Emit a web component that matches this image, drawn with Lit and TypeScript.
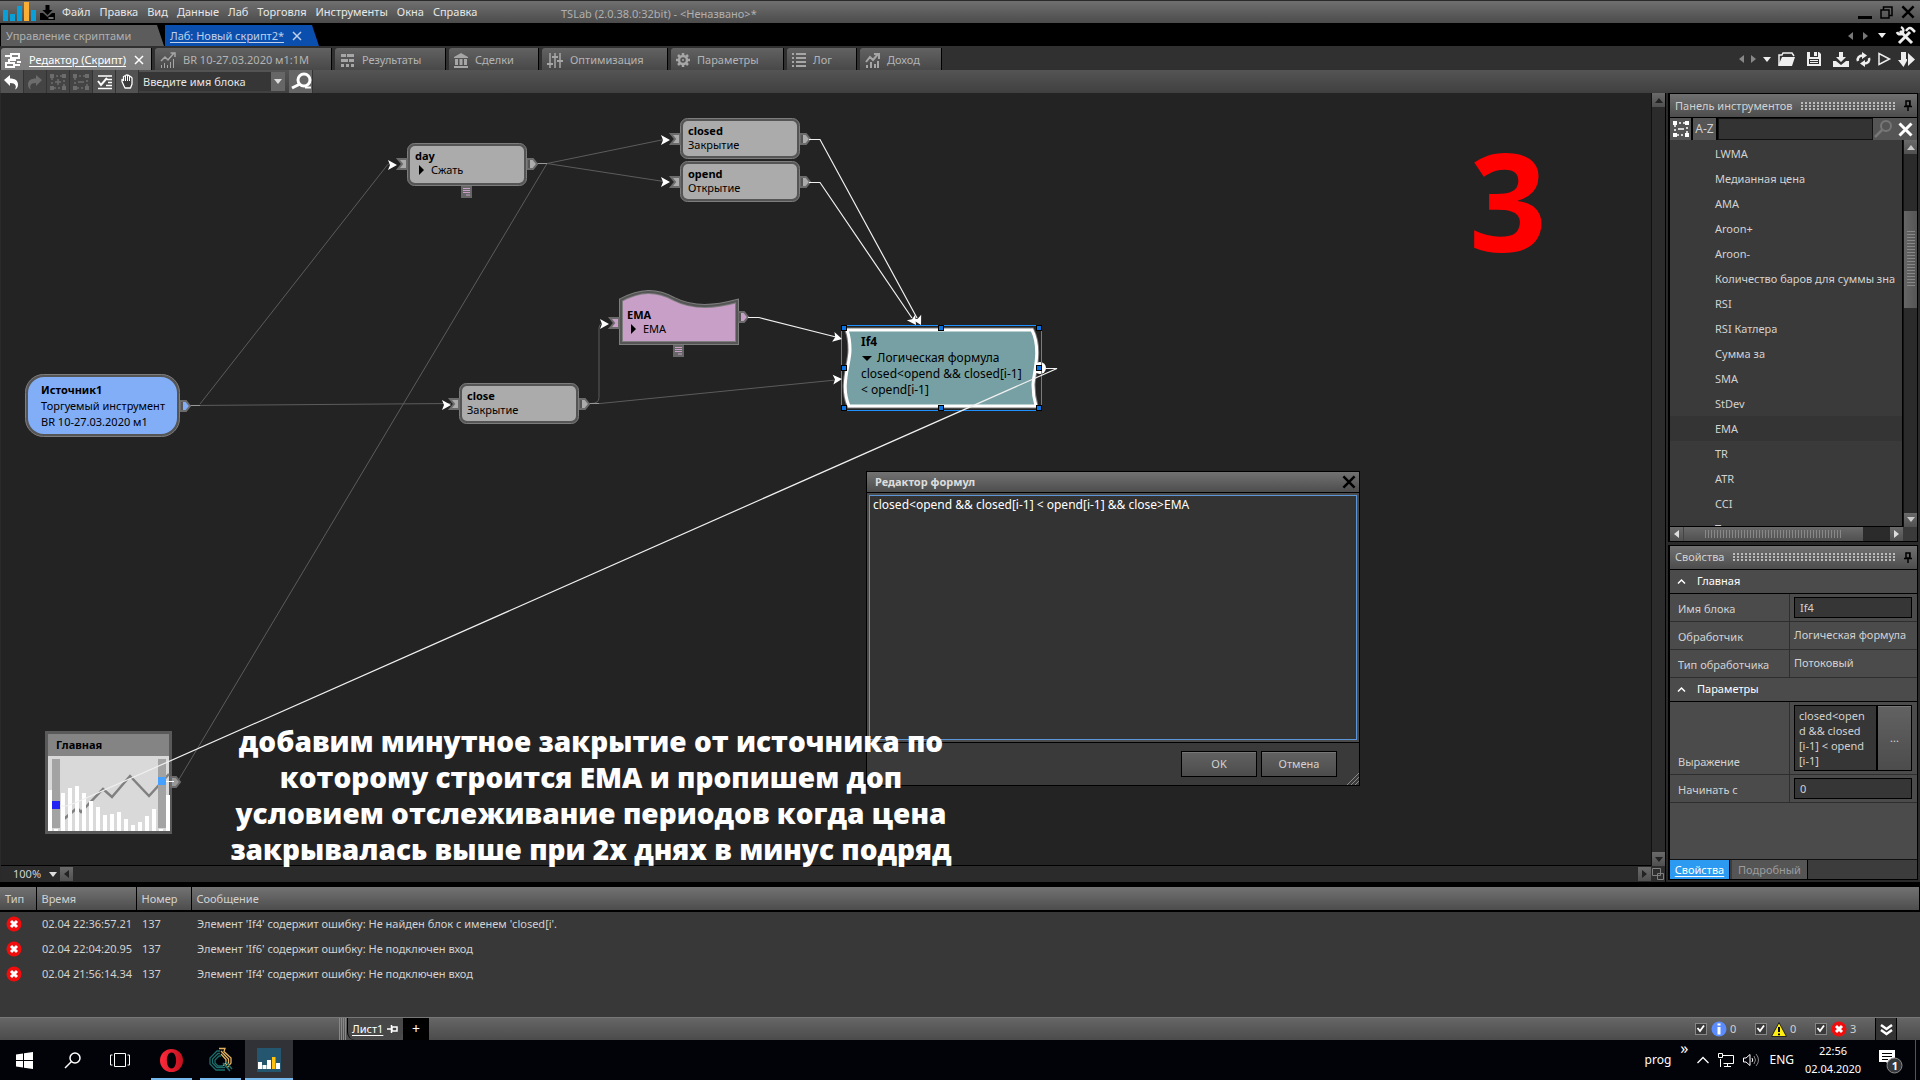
import { LitElement, html, svg, css, nothing, type TemplateResult } from "lit";
import { customElement, state } from "lit/decorators.js";
import { classMap } from "lit/directives/class-map.js";
import { styleMap } from "lit/directives/style-map.js";

/* ---------- icons ---------- */

const icon = (w: number, h: number, body: unknown, vb = `0 0 ${w} ${h}`) =>
  html`<svg class="ico" width=${w} height=${h} viewBox=${vb} aria-hidden="true">${body}</svg>`;

const logoIcon = icon(33, 20, svg`
  <g fill="#0b9fd8"><path d="M0 8h5v11H0z"/><path d="M7 12h5v7H7z"/><path d="M14 4h5v15h-5z"/><path d="M28 8h5v11h-5z"/></g>
  <path fill="#f9ae35" d="M21 0h5v19h-5z"/>`);

const trayIcon = icon(15, 15, svg`<path fill="#000" d="M5.500 0h4v5h3L7.500 10 2.500 5h3zM0 8h3l4.500 4L12 8h3v7H0z"/><path stroke="#ddd" d="M8.500 13h5"/>`);

const editorIcon = icon(16, 16, svg`
  <g fill="none" stroke="#fff" stroke-width="2"><path d="M6 2h8v4H6zM1 11h8v4H1zM9 13h6M4 11V8h6V6"/></g>
  <path stroke="#fff" stroke-width="2" d="M0 4h5M12 10h4"/>`);

const chartIcon = icon(16, 16, svg`
  <path fill="none" stroke="#a6a6a6" stroke-width="1.500" d="M1 9l4-4 3 3 6-7M10.500 1H15v4"/>
  <path stroke="#a6a6a6" d="M1.500 16v-3M4.500 16v-5M7.500 16v-3M10.500 16v-6M13.500 16V7"/>`);

const resultsIcon = icon(13, 13, svg`<path fill="#a6a6a6" d="M0 0h5v3H0zM6 0h7v3H6zM0 5h7v3H0zM8 5h5v3H8zM0 10h3v3H0zM5 10h3v3H5zM10 10h3v3h-3z"/>`);

const bankIcon = icon(14, 15, svg`<path fill="#a6a6a6" d="M7 0l7 4v1H0V4zM1 6h3v6H1zM5.500 6h3v6h-3zM10 6h3v6h-3zM0 13h14v2H0z"/>`);

const slidersIcon = icon(16, 15, svg`<path stroke="#a6a6a6" stroke-width="1.500" d="M3 0v15M8 0v15M13 0v15"/><path stroke="#a6a6a6" stroke-width="2" d="M0 11h6M5 4h6M10 8h6"/>`);

const gearIcon = icon(14, 14, svg`
  <circle cx="7" cy="7" r="4" fill="none" stroke="#a6a6a6" stroke-width="2.500"/>
  <path stroke="#a6a6a6" stroke-width="2.500" d="M7 0v3M7 11v3M0 7h3M11 7h3M2 2l2 2M10 10l2 2M12 2l-2 2M4 10l-2 2"/>
  <circle cx="7" cy="7" r="1" fill="#a6a6a6"/>`);

const logIcon = icon(14, 14, svg`<path stroke="#a6a6a6" stroke-width="2" d="M0 1h2M4 1h10M0 5h2M4 5h10M0 9h2M4 9h10M0 13h2M4 13h10"/>`);

const incomeIcon = icon(15, 15, svg`
  <path fill="none" stroke="#a6a6a6" stroke-width="2" d="M1 9l4-5 3 3 5-6M9 1h5v5"/>
  <path stroke="#a6a6a6" stroke-width="2" d="M2 15v-3M6 15V9M10 15v-4M13 15V8"/>`);

const closeIcon = (s: number, color: string, w = 1.5) =>
  icon(s, s, svg`<path stroke=${color} stroke-width=${w} d="M1 1l8 8M9 1l-8 8"/>`, "0 0 10 10");

const undoIcon = icon(16, 16, svg`<path fill="#fff" d="M0 6l6-5v3.500c5 0 8 2 8 6 0 2.500-1 4-3 5 1-2 1-3 .5-4-.8-1.800-2.500-2.500-5.500-2.500v3z"/>`);
const redoIcon = icon(16, 16, svg`<path fill="#6c6c6c" d="M15 6L9 1v3.500c-5 0-8 2-8 6 0 2.500 1 4 3 5-1-2-1-3-.5-4 .8-1.800 2.500-2.500 5.500-2.500v3z"/>`);

const boxIcon = (color: string, plus: boolean, s = 16) => icon(s, s, svg`
  <path fill="none" stroke=${color} stroke-dasharray="2 2" stroke-width="1.500" d="M2 2h12v12H2z"/>
  <path fill=${color} d="M0 0h4v4H0zM12 0h4v4h-4zM0 12h4v4H0zM12 12h4v4h-4z"/>
  <path stroke=${color} stroke-width="1.500" d=${plus ? "M5 8h6M8 5v6" : "M5 8h6"}/>`, "0 0 16 16");

const checklistIcon = icon(15, 14, svg`
  <path stroke="#fff" stroke-width="1.500" d="M1 1h14M10 4.500h5M11 7.500h4M9 10.500h6M1 13.500h14"/>
  <path fill="none" stroke="#fff" stroke-width="2" d="M1 6l3 4 6-7"/>`);

const handIcon = icon(12, 15, svg`<path fill="#3b3b3b" stroke="#fff" stroke-width="1.300" stroke-linejoin="round" d="M3 12L1 7.500V5.500l1.500 1V2.500l1.500-.5V1.500L5.500 1 7 1.200l1.200.6L9.500 2.500 11 4v6l-1.500 4h-5.500z"/><path stroke="#fff" d="M4.500 2v5M6.500 1v6M8.500 2v5"/>`);

const seekIcon = icon(20, 17, svg`<circle cx="13" cy="7" r="6" fill="none" stroke="#fff" stroke-width="3"/><path stroke="#fff" stroke-width="3" d="M9 11l-8 4"/><path stroke="#fff" stroke-width="2" d="M14 14.500h6"/>`);

const tri = (dir: "l" | "r" | "u" | "d", color: string) => {
  const shapes = {
    l: [5, 8, "M5 0v8L0 4z"],
    r: [5, 8, "M0 0v8l5-4z"],
    u: [8, 5, "M0 5h8L4 0z"],
    d: [8, 5, "M0 0h8L4 5z"],
  } as const;
  const [w, h, d] = shapes[dir];
  return icon(w, h, svg`<path fill=${color} d=${d}/>`);
};

const minimizeIcon = icon(14, 14, svg`<path fill="#000" d="M0 11h14v3H0z"/>`);
const restoreIcon = icon(13, 13, svg`<path fill="none" stroke="#000" stroke-width="1.500" d="M1 4h8v8H1zM3.500 4V1H12v8.500H9"/>`);

const toolsIcon = icon(19, 17, svg`
  <path stroke="#eee" stroke-width="3" d="M4 4l12 12M14 5L3 16"/>
  <path fill="none" stroke="#eee" stroke-width="2.500" d="M1 5c1 3 5 3 6 0M5 0c2 1 3 3 2 5M10 4c2-3 4-4 6-2l3 3"/>`);

const folderIcon = icon(17, 14, svg`<path fill="none" stroke="#eee" stroke-width="1.500" d="M1 13V3h3l1-2h9l2 3"/><path fill="#eee" d="M4 5h13l-3 9H0z"/>`);
const saveIcon = icon(14, 14, svg`<path fill="#eee" fill-rule="evenodd" d="M0 0h3v5h8V0h1l2 2v12H0zM2 7v5h10V7zM7 0h3v4H7z"/><path stroke="#eee" d="M3 8.500h8M3 10.500h8"/>`);
const downloadIcon = icon(16, 15, svg`<path fill="#eee" d="M6 0h4v5h3l-5 5-5-5h3zM0 9h3l5 4 5-4h3v6H0z"/>`);
const refreshIcon = icon(15, 13, svg`<path fill="none" stroke="#eee" stroke-width="2.500" d="M2 8C1 5 3 2.500 7 2.500M13 5c1 3-1 5.500-5 5.500"/><path fill="#eee" d="M6-1l5 3.500-5 3.500zM9 7v7l-5-3.500z"/>`);
const playIcon = icon(13, 14, svg`<path fill="none" stroke="#eee" stroke-width="1.500" d="M1 1.500v11L11.500 7z"/>`);
const runAllIcon = icon(17, 15, svg`<path fill="#eee" d="M3 0h5v7h2L5.500 15 0 8h3z"/><path fill="#eee" d="M10 1l7 6.500L10 14z"/><path stroke="#333" d="M9.500 0v14"/>`);

const pinIcon = icon(8, 11, svg`<path fill="none" stroke="#000" stroke-width="1.500" d="M2 1h4v5H2zM0 6.500h8M4 7v4"/><path stroke="#000" d="M5.500 1v5"/>`);
const sidePinIcon = icon(11, 8, svg`<path fill="none" stroke="#fff" stroke-width="1.500" d="M10 2v4H5V2zM4.500 0v8M4 4H0"/>`);
const lensIcon = icon(19, 18, svg`<circle cx="12" cy="6" r="5" fill="none" stroke="#777" stroke-width="2"/><path stroke="#777" stroke-width="2.500" d="M8 10l-7 7"/>`);
const chevronUp = icon(7, 5, svg`<path fill="none" stroke="#fff" stroke-width="1.500" d="M0 4.500L3.500 1 7 4.500"/>`);
const fitIcon = icon(12, 12, svg`<path fill="none" stroke="#808080" d="M.5.500h8v7h-8zM5.500 5.500h6v6h-6z"/>`);
const gripIcon = icon(12, 12, svg`<path stroke="#888" d="M0 12L12 0M4 12l8-8M8 12l4-4"/>`);

const errorIcon = icon(16, 16, svg`<circle cx="8" cy="8" r="7.500" fill="#f20d0d"/><path stroke="#fff" stroke-width="3" d="M5 5l6 6M11 5l-6 6"/>`);
const infoIcon = icon(16, 16, svg`<circle cx="8" cy="8" r="7.500" fill="#5a8cff"/><path stroke="#fff" stroke-width="3" d="M8 2.500v2M8 6v7.500"/>`);
const warnIcon = icon(16, 15, svg`<path fill="#ffee10" stroke="#222" d="M8 .5L15.500 14.500H.5z"/><path stroke="#000" stroke-width="2" d="M8 5v5M8 11.500v1.800"/>`);
const tickIcon = svg`<path fill="none" stroke="#fff" stroke-width="1.800" d="M2.500 5l2.500 3 4-5.500"/>`;
const doubleDown = icon(11, 11, svg`<path fill="none" stroke="#fff" stroke-width="2.500" d="M0 1l5.500 4L11 1M0 6l5.500 4L11 6"/>`);

const winIcon = icon(17, 17, svg`<path fill="#fff" d="M0 2.500l7-1V8H0zM8 1.300L17 0v8H8zM0 9h7v6.500l-7-1zM8 9h9v8l-9-1.300z"/>`);
const searchIcon = icon(17, 17, svg`<circle cx="11" cy="6" r="5" fill="none" stroke="#fff" stroke-width="1.500"/><path stroke="#fff" stroke-width="1.500" d="M7.500 9.500L1 16"/>`);
const taskViewIcon = icon(20, 14, svg`<path fill="none" stroke="#fff" d="M4.500.5h11v13h-11zM2.500 2h-2v10h2M17.500 2h2v10h-2"/>`);
const operaIcon = icon(23, 23, svg`
  <defs><linearGradient id="op" x1="0" x2="1"><stop offset="0" stop-color="#ff2b3d"/><stop offset="1" stop-color="#c2101e"/></linearGradient></defs>
  <path fill="url(#op)" fill-rule="evenodd" d="M11.500 0a11.500 11.500 0 100 23 11.500 11.500 0 000-23zm0 3.500c2.800 0 4.600 3.400 4.600 8s-1.800 8-4.600 8-4.600-3.400-4.600-8 1.800-8 4.600-8z"/>`);
const quikIcon = icon(24, 24, svg`
  <g fill="none" stroke="#1c6d6b" stroke-width="1.300"><path d="M11 3H8L1 10v6l6 6h9"/><path d="M11 5.500H9L3.500 11v4l4.500 4.500h8"/><path d="M12 8h-2L6 12v3l3 3h5"/></g>
  <g fill="none" stroke="#e5b25f" stroke-width="1.300"><path d="M10 .5h6l-1 3 7 6.500v5l-4 5"/><path d="M12 3l7.500 8v4L16 18"/><path d="M12 6l5 5.500V15l-3 2.500"/></g>
  <path stroke="#1c6d6b" stroke-width="1.500" d="M14 15l7 8M17 14l6 7"/>`);
const tslabIcon = icon(24, 24, svg`<path fill="#24566f" d="M0 0h24v24H0z"/><path fill="#fff" d="M1 14h4v7H1zM5.500 17h4v4h-4zM10 12h4v9h-4zM19 15h4v6h-4z"/><path fill="#ffc20e" d="M15 9h3.500v12H15z"/>`);
const trayUpIcon = icon(12, 8, svg`<path fill="none" stroke="#fff" stroke-width="1.300" d="M.5 7L6 1.500 11.500 7"/>`);
const netIcon = icon(16, 14, svg`<path fill="none" stroke="#fff" d="M4 2.500h11.500v8H5.500M9.500 11v2.500M6 13.500h7M2.500 6v8M.5.500h4v4h-4z"/>`);
const soundIcon = icon(17, 14, svg`<path fill="none" stroke="#fff" d="M.5 5v4h2.500l4 3.500V1.500L3 5z"/><path fill="none" stroke="#fff" d="M9 5q1.500 2 0 4"/><path fill="none" stroke="#888" d="M11 3q3 4 0 8M13 1q5 6 0 12"/>`);
const noteIcon = icon(24, 24, svg`<path fill="#fff" d="M0 0h16v12h-5v4l-4-4H0z"/><path stroke="#000" d="M3 3.500h10M3 6.500h10M3 9.500h6"/>
  <circle cx="15.500" cy="15.500" r="7.500" fill="#35383c" stroke="#8b8b8b"/>`);

/* ---------- data ---------- */

const MENU = ["Файл", "Правка", "Вид", "Данные", "Лаб", "Торговля", "Инструменты", "Окна", "Справка"];

const DOC_TABS: { label: string; size: string; icon: TemplateResult; active?: boolean }[] = [
  { label: "Редактор (Скрипт)", size: "w1", icon: editorIcon, active: true },
  { label: "BR 10-27.03.2020 м1:1М", size: "w2", icon: chartIcon },
  { label: "Результаты", size: "w3", icon: resultsIcon },
  { label: "Сделки", size: "w4", icon: bankIcon },
  { label: "Оптимизация", size: "w5", icon: slidersIcon },
  { label: "Параметры", size: "w6", icon: gearIcon },
  { label: "Лог", size: "w7", icon: logIcon },
  { label: "Доход", size: "w8", icon: incomeIcon },
];

const INDICATORS = ["LWMA", "Медианная цена", "AMA", "Aroon+", "Aroon-", "Количество баров для суммы зна",
  "RSI", "RSI Катлера", "Сумма за", "SMA", "StDev", "EMA", "TR", "ATR", "CCI", "T"];

const MESSAGES = [
  { time: "02.04 22:36:57.21", num: "137", text: "Элемент 'If4' содержит ошибку: Не найден блок с именем 'closed[i'." },
  { time: "02.04 22:04:20.95", num: "137", text: "Элемент 'If6' содержит ошибку: Не подключен вход" },
  { time: "02.04 21:56:14.34", num: "137", text: "Элемент 'If4' содержит ошибку: Не подключен вход" },
];

const CAPTION = ["добавим минутное закрытие от источника по", "которому строится EMA и пропишем доп",
  "условием отслеживание периодов когда цена", "закрывалась выше при 2х днях в минус подряд"];

type Label = { x: number; y: number; title: string; lines: string[]; fold?: "r" | "d"; kind?: string };
const LABELS: Label[] = [
  { x: 415, y: 56, title: "day", lines: ["Сжать"], fold: "r" },
  { x: 688, y: 31, title: "closed", lines: ["Закрытие"] },
  { x: 688, y: 74, title: "opend", lines: ["Открытие"] },
  { x: 627, y: 215, title: "EMA", lines: ["EMA"], fold: "r" },
  { x: 467, y: 296, title: "close", lines: ["Закрытие"] },
  { x: 41, y: 289, title: "Источник1", lines: ["Торгуемый инструмент", "BR 10-27.03.2020 м1"], kind: "tall" },
  { x: 861, y: 241, title: "If4", lines: ["Логическая формула", "closed<opend && closed[i-1]", "< opend[i-1]"], fold: "d", kind: "tall formula" },
  { x: 56, y: 645, title: "Главная", lines: [] },
];

/* Arrow head whose tip is at x,y and which points along the angle. */
const arrow = (x: number, y: number, a = 0) =>
  svg`<path fill="#fff" transform="translate(${x} ${y}) rotate(${a})" d="M0 0L-9-5l2 5-2 5z"/>`;

const inPort = (x: number, y: number, fill = "#ababab") =>
  svg`<path fill=${fill} stroke="#6b6b6b" stroke-width="2" d="M${x} ${y - 5}h9v10h-9l4-5z"/>`;

const outPort = (x: number, y: number, fill = "#ababab") =>
  svg`<path fill=${fill} stroke="#6b6b6b" stroke-width="2" d="M${x} ${y - 5}h5l4 5-4 5h-5z"/><path stroke="#555" stroke-width="2" d="M${x + 1} ${y - 4}v8"/>`;

const block = (x: number, y: number, w: number, h: number, r: number, fill: string) => svg`
  <rect x=${x + 0.5} y=${y + 0.5} width=${w - 1} height=${h - 1} rx=${r} fill="#555" stroke="#7d7d7d"/>
  <rect x=${x + 3} y=${y + 3} width=${w - 6} height=${h - 6} rx=${r - 2} fill=${fill}/>`;

const noteMark = (x: number, y: number) => svg`
  <path fill="#666" d="M${x} ${y}h11v12h-11z"/>
  <path stroke="#c79fc7" d="M${x + 2} ${y + 2.5}h7M${x + 2} ${y + 4.5}h7M${x + 2} ${y + 6.5}h7M${x + 5} ${y + 9}h4"/>`;

const BARS = [
  [48, 41], [54, 2], [61, 38], [68, 43], [75, 45], [82, 38], [89, 30], [96, 24], [103, 16], [110, 17], [117, 19],
  [124, 12], [131, 6], [138, 9], [145, 15], [152, 22], [159, 2], [166, 36],
];

const HANDLES = [[844, 328], [941, 328], [1039, 328], [844, 368], [1039, 368], [844, 408], [941, 408], [1039, 408]];

const diagram = html`<svg class="diagram" viewBox="0 93 1651 773" aria-hidden="true">
  <g fill="none" stroke="#5c5c5c">
    <path d="M190 405.500L451 403.500M200 404L385 168q2-4 6-5"/>
    <path d="M536 163.500h11L664 139.500M547 163.500L664 181.500M547 163.500L178 781"/>
    <path d="M588 403.500h12L836 380M591 403.500q8 0 8-6V328q0-4 4-5"/>
    <path stroke="#999" d="M190 405.500h10M536 163.500h11M588 403.500h11"/>
  </g>
  ${arrow(397, 165)}${arrow(670, 140)}${arrow(670, 182)}${arrow(609, 324)}${arrow(451, 405)}

  ${block(25, 374, 155, 63, 18, "#82adf7")}${outPort(181, 406, "#82adf7")}
  ${block(407, 143, 120, 43, 7, "#ababab")}${inPort(398, 164)}${outPort(528, 164)}${noteMark(461, 186)}
  ${block(680, 118, 120, 41, 7, "#ababab")}${inPort(671, 139)}${outPort(801, 139)}
  ${block(680, 161, 120, 41, 7, "#ababab")}${inPort(671, 182)}${outPort(801, 182)}
  ${block(459, 383, 120, 41, 7, "#ababab")}${inPort(450, 404)}${outPort(580, 404)}
  <path fill="#c79fc7" stroke="#7d7d7d" stroke-width="4" d="M621 343V300C640 290 656 289 674 299C694 309 715 307 737 301V343z"/>
  <path fill="none" stroke="#555" stroke-width="2" d="M621 343V300C640 290 656 289 674 299C694 309 715 307 737 301V343z"/>
  ${inPort(610, 323, "#c79fc7")}${outPort(739, 317, "#c79fc7")}${noteMark(673, 345)}

  <path fill="#848484" stroke="#5a5a5a" stroke-width="3" d="M46.500 732.500h124v100h-124z"/>
  <path fill="#d9d9d9" d="M48 756h121v75H48z"/>
  <path fill="none" stroke="#808080" stroke-width="2.500" d="M64 819L77 808l4 4 22-23 9 8 18-21 19 20 20-22"/>
  <path fill="#a3a3a3" d="M52 759h8v69h-8zM158 759h8v69h-8z"/>
  ${BARS.map(([x, h]) => svg`<rect x=${x} y=${831 - h} width="4" height=${h} fill="#fff"/>`)}
  <path fill="#2222f5" d="M52 801h8v8h-8z"/><path fill="#45a0ff" d="M158 777h8v8h-8z"/>
  <path fill="#999" stroke="#6b6b6b" stroke-width="2" d="M171 777h5l4 5-4 5h-5z"/>
  <path stroke="#fff" d="M166 781.500h8"/>

  <path fill="#76a0a3" stroke="#777" stroke-width="5" d="M847 330H1032C1042 350 1033 375 1033 385Q1033 396 1036 406H849C840 385 850 365 850 350Q850 338 847 330z"/>
  <path fill="#76a0a3" stroke="#fff" stroke-width="3" d="M847 330H1032C1042 350 1033 375 1033 385Q1033 396 1036 406H849C840 385 850 365 850 350Q850 338 847 330z"/>
  <circle cx="1040" cy="368" r="6" fill="#fff"/>
  <path fill="none" stroke="#1e90ff" d="M841.500 325.500h200v85h-200z"/>
  ${HANDLES.map(([x, y]) => svg`<rect x=${x - 2.5} y=${y - 2.5} width="5" height="5" fill="#0a74e0" stroke="#000"/>`)}

  <g fill="none" stroke="#f0f0f0" stroke-width="1.200">
    <path d="M809 139.500h11L917 318M809 182.500h11L912 318M748 317.500h11L836 337M1045 368.500h12L75 803L66 806H60"/>
  </g>
  ${arrow(921, 325, 62)}${arrow(916, 325, 56)}${arrow(842, 339, 14)}${arrow(842, 379, -4)}
</svg>`;

@customElement("app-root")
export class AppRoot extends LitElement {
  @state() private formula = "closed<opend && closed[i-1] < opend[i-1] && close>EMA";

  static styles = css`
    :host {
      display: flex;
      flex-direction: column;
      height: 100vh;
      background: #000;
      color: #d2d2d2;
      font: 11px/16px "Noto Sans", "Open Sans", sans-serif;
      overflow: hidden;
    }
    * { box-sizing: border-box; }
    button, input, textarea { font: inherit; color: inherit; margin: 0; border-radius: 0; }
    button { background: none; border: 0; padding: 0; display: flex; align-items: center; justify-content: center; white-space: nowrap; }
    textarea { resize: none; overflow: hidden; display: block; }
    a { color: inherit; text-decoration: none; white-space: nowrap; }
    .ico { display: block; flex: none; overflow: visible; }
    .row { display: flex; align-items: center; }
    .fill { flex: 1; min-width: 0; }

    .title { height: 23px; flex: none; border-top: 1px solid #2a2a2a; background: linear-gradient(#707070, #4b4b4b); padding: 0 5px 0 3px; color: #e8e8e8; }
    .title nav { display: flex; gap: 9px; width: 500px; padding-left: 7px; }
    .title .ico + .ico { margin-left: 4px; }
    .title .name { color: #b0b0b0; flex: 1; padding: 3px 0 0 6px; }
    .wins { display: flex; gap: 8px; }

    .tabs1 { height: 23px; flex: none; padding: 2px 5px 0 1px; gap: 1px; }
    .tabs1 a { height: 21px; line-height: 21px; padding-left: 5px; background: #5c5c5c; color: #b0b0b0; clip-path: polygon(0 0, calc(100% - 7px) 0, 100% 100%, 0 100%); width: 163px; }
    .tabs1 a.on { width: 154px; background: #0b4fae; color: #c0d0ea; display: flex; align-items: center; gap: 8px; }
    .on .txt { text-decoration: underline; text-underline-offset: 2px; }
    .arrows { gap: 10px; }

    .tabs2 { height: 24px; flex: none; background: #303030; padding: 2px 5px 0 1px; align-items: stretch; gap: 3px; }
    .tabs2 > a { display: flex; align-items: center; gap: 8px; padding: 2px 5px 0 6px; background: linear-gradient(#626262, #484848); border-right: 1px solid #000; border-radius: 3px 0 0 0; color: #b4b4b4; }
    .tabs2 > a.on { background: linear-gradient(#858585, #7e7e7e); color: #fff; padding-left: 4px; }
    .w1 { width: 151px; } .w2 { width: 177px; } .w3 { width: 111px; } .w4 { width: 90px; }
    .w5 { width: 126px; } .w6 { width: 113px; } .w7 { width: 70px; } .w8 { width: 82px; }
    .tabs2 > a.w2 { padding-left: 5px; gap: 7px; }
    .tabs2 > a.w4, .tabs2 > a.w5, .tabs2 > a.w6, .tabs2 > a.w7, .tabs2 > a.w8 { padding-left: 5px; gap: 7px; }
    .cmds { gap: 7px; }
    .cmds .gap { margin-right: 5px; }

    .bar { height: 23px; flex: none; background: linear-gradient(#545454, #404040); padding: 0 1px; align-items: stretch; }
    .bar button { width: 19px; background: #525252; border-right: 1px solid #333; }
    .bar button.wide { width: 23px; }
    .bar button.off { background: #444; }
    .bar button.seek { width: 24px; margin-left: 4px; background: #666; }
    .combo { display: flex; width: 146px; margin: 2px 0; background: #363636; }
    .combo input { flex: 1; min-width: 0; border: 0; background: none; padding: 0 0 0 4px; color: #e6e6e6; outline: 0; }
    .bar .combo button { width: 14px; background: #666; border: 0; }

    .main { flex: 1; min-height: 0; display: flex; background: #2a2a2a; }
    .work { flex: 1; min-width: 0; display: grid; grid-template: minmax(0, 1fr) 16px / minmax(0, 1fr) 14px; padding-left: 1px; }
    .canvas { position: relative; z-index: 1; background: #232323; border-bottom: 1px solid #000; }
    .diagram { position: absolute; left: -1px; top: 0; width: 1651px; height: 773px; }
    .label { position: absolute; color: #000; line-height: 14px; white-space: nowrap; }
    .label.tall { line-height: 16px; }
    .label.formula { font-size: 12px; }
    .label b, .label span { display: block; }
    .label .fold { display: flex; align-items: center; gap: 6px; padding-left: 4px; }
    .label .fold.d { padding-left: 1px; gap: 5px; }
    .caption { position: absolute; left: 190px; top: 630px; width: 800px; margin: 0; text-align: center; color: #fff; font: 800 28px/36px "Open Sans", sans-serif; z-index: 3; }
    .caption span { display: block; }
    .step { position: absolute; left: 1468px; top: 34px; width: 90px; color: #f00; font: 700 136px/146px "Open Sans", sans-serif; }

    .dialog { position: absolute; left: 865px; top: 378px; width: 494px; height: 315px; background: #3a3a3a; border: 1px solid #000; display: flex; flex-direction: column; z-index: 2; }
    .dialog header { display: flex; align-items: center; justify-content: space-between; height: 21px; padding: 0 3px 0 8px; background: linear-gradient(#727272, #4d4d4d); border-bottom: 1px solid #000; font-weight: 700; color: #ddd; }
    .dialog .edit { flex: 1; background: #4a4a4a; padding: 2px; border-bottom: 1px solid #000; }
    .dialog textarea { width: 100%; height: 100%; background: #333; border: 1px solid #5a96d8; color: #fff; padding: 1px 3px; outline: 0; font-size: 12px; }
    .dialog footer { position: relative; height: 42px; display: flex; justify-content: flex-end; align-items: center; gap: 4px; padding: 0 22px 0 0; }
    .dialog footer button, .dots3 { background: linear-gradient(#626262, #4c4c4c); border: 1px solid #000; box-shadow: inset 0 1px #777; }
    .dialog footer button { width: 76px; height: 26px; }
    .dialog .grip { position: absolute; right: 0; bottom: 0; }

    .vbar { display: flex; flex-direction: column; justify-content: space-between; background: #2b2b2b; border-left: 1px solid #111; }
    .sb { width: 13px; height: 14px; background: linear-gradient(#6a6a6a, #505050); }
    .hbar { display: flex; align-items: center; background: #2b2b2b; }
    .zoom { display: flex; align-items: center; gap: 8px; width: 59px; padding-left: 12px; }
    .corner { display: flex; align-items: center; justify-content: center; background: #2e2e2e; }

    .side { width: 255px; flex: none; display: flex; flex-direction: column; gap: 3px; padding: 0 2px 2px; background: #2a2a2a; border-left: 1px solid #000; }
    .panel { border: 1px solid #000; border-width: 1px 1px 1px 2px; display: flex; flex-direction: column; background: #3a3a3a; min-height: 0; }
    .panel.tools { flex: 449; }
    .panel.props { flex: 335; background: #4b4b4b; }
    .panel h2 { margin: 0; height: 24px; flex: none; display: flex; align-items: center; gap: 9px; padding: 0 5px; background: linear-gradient(#707070, #4d4d4d); border-bottom: 1px solid #000; font: inherit; white-space: nowrap; }
    .dots { flex: 1; height: 8px; background: radial-gradient(circle at 1px 1px, #bbb 0 1px, transparent 1px) 0 0 / 4px 3px; }
    .find { display: flex; height: 22px; flex: none; }
    .find button { width: 21px; background: #555; }
    .find button.az { width: 27px; font-size: 12px; border: 1px solid #000; border-width: 0 2px; }
    .find input { flex: 1; min-width: 0; background: #333; border: 1px solid #111; outline: 0; }
    .find button.clear { width: 23px; }
    .lists { flex: 1; min-height: 0; display: grid; grid-template: minmax(0, 1fr) 14px / minmax(0, 1fr) 14px; background: #3a3a3a; }
    .lists ul { list-style: none; margin: 0; padding: 1px 0 0; overflow: hidden; border-right: 1px solid #000; border-bottom: 1px solid #000; }
    .lists li { height: 25px; line-height: 25px; padding-left: 45px; white-space: nowrap; }
    .lists li.hot { background: #343434; }
    .lists .vbar { justify-content: flex-start; }
    .lists .vbar .track1 { flex: 57; } .lists .vbar .track2 { flex: 205; }
    .thumb { display: flex; align-items: center; justify-content: center; background: linear-gradient(90deg, #666, #555); }
    .thumb i { display: block; }
    .vbar .thumb { flex: 97; }
    .vbar .thumb i { width: 8px; height: 56px; background: repeating-linear-gradient(#888 0 1px, transparent 1px 3px); }
    .lists .hbar .thumb { flex: 177; height: 14px; background: linear-gradient(#6a6a6a, #505050); border-left: 1px solid #444; }
    .lists .hbar .rest { flex: 27; }
    .hbar .thumb i { width: 136px; height: 8px; background: repeating-linear-gradient(90deg, #888 0 1px, transparent 1px 3px); }

    .grp { height: 24px; flex: none; display: flex; align-items: center; gap: 12px; padding: 0 8px; color: #fff; border-bottom: 1px solid #000; }
    .prop { display: grid; grid-template-columns: 120px minmax(0, 1fr); border-bottom: 1px solid #2e2e2e; flex: none; min-height: 28px; }
    .prop label, .prop .lbl { padding: 0 0 4px 8px; display: flex; align-items: flex-end; border-right: 1px solid #2e2e2e; }
    .prop .val { padding: 3px 5px 3px 4px; display: flex; align-items: center; min-width: 0; white-space: nowrap; }
    .prop input { width: 100%; height: 21px; background: #363636; border: 1px solid #000; padding: 0 5px; outline: 0; }
    .prop textarea { width: 83px; height: 66px; background: #363636; border: 1px solid #000; padding: 2px 0 0 4px; line-height: 15px; outline: 0; white-space: pre; }
    .dots3 { flex: 1; height: 66px; }
    .ptabs { margin-top: auto; display: flex; gap: 2px; height: 20px; border-top: 1px solid #111; background: #3c3c3c; }
    .ptabs a { width: 76px; text-align: center; line-height: 19px; background: #555; color: #9c9c9c; border-right: 1px solid #000; }
    .ptabs a.on { width: 60px; background: #2b9af0; color: #fff; }

    .log { height: 135px; flex: none; background: #383838; border-top: 5px solid #000; }
    .log table { width: 100%; border-collapse: collapse; table-layout: fixed; }
    .log th { height: 24px; padding: 0 0 0 5px; text-align: left; font-weight: 400; background: linear-gradient(#727272, #4d4d4d); border-right: 1px solid #000; border-bottom: 2px solid #000; }
    .log td { height: 25px; padding: 0 0 0 6px; }
    .c1 { width: 36px; } .c2 { width: 100px; } .c3 { width: 55px; }

    .status { height: 23px; flex: none; background: linear-gradient(#666, #4b4b4b); border-top: 1px solid #777; }
    .status .sheets { display: flex; align-items: stretch; height: 22px; width: 429px; justify-content: flex-end; }
    .ribs { width: 7px; background: repeating-linear-gradient(90deg, #888 0 1px, transparent 1px 2px); margin-right: 1px; }
    .sheet { display: flex; align-items: center; gap: 4px; width: 56px; padding-left: 4px; background: #484848; color: #fff; border-left: 1px solid #000; border-radius: 0 0 8px 8px; }
    .sheet span { text-decoration: underline; text-underline-offset: 2px; }
    .status .add { width: 26px; background: #000; color: #fff; font-size: 14px; }
    .filter { display: flex; align-items: center; gap: 3px; width: 60px; }
    .filter input { appearance: none; width: 12px; height: 12px; border: 1px solid #888; background: #3a3a3a; }
    .check { display: grid; margin-right: 1px; }
    .check > * { grid-area: 1 / 1; }
    .check svg { pointer-events: none; }
    .status .more { width: 22px; height: 22px; background: #333; border: 1px solid #000; border-width: 0 1px; margin-right: 23px; }

    .taskbar { height: 40px; flex: none; background: #020308; padding-right: 4px; color: #fff; align-items: stretch; }
    .taskbar button { width: 48px; }
    .taskbar .app { width: 49px; padding: 2px 4px 0; }
    .taskbar .app.first { margin-left: 3px; }
    .taskbar .app span { display: flex; align-items: center; justify-content: center; width: 100%; height: 100%; border-bottom: 2px solid #76b9ed; }
    .taskbar .app.cur { background: #303237; padding: 2px 0 0; width: 48px; }
    .tray { display: flex; align-items: center; gap: 9px; margin-right: 5px; font-size: 12px; }
    .tray .up { align-self: flex-start; line-height: 16px; font-size: 16px; }
    .clock { text-align: center; line-height: 18px; width: 68px; padding-top: 2px; }
    .taskbar .bell { position: relative; padding-top: 4px; }
    .bell b { position: absolute; left: 24px; top: 18px; width: 8px; text-align: center; line-height: 16px; }
    .edge { width: 1px; background: #555; }
  `;

  private label(l: Label) {
    return html`<div class="label ${l.kind ?? ""}" style=${styleMap({ left: `${l.x - 1}px`, top: `${l.y}px` })}>
      <b>${l.title}</b>${l.lines.map((t, i) =>
        i === 0 && l.fold ? html`<span class="fold ${l.fold}">${l.fold === "r"
          ? icon(6, 10, svg`<path d="M0 0v10l5-5z"/>`)
          : icon(10, 5, svg`<path d="M0 0h10L5 5z"/>`)}${t}</span>` : html`<span>${t}</span>`)}
    </div>`;
  }

  private filter(id: string, name: string, ico: TemplateResult, n: number) {
    return html`<label class="filter" for=${id}><span class="check"><input id=${id} type="checkbox" checked aria-label=${name}>${icon(12, 12, tickIcon)}</span>${ico}<span>${n}</span></label>`;
  }

  render() {
    return html`
      <header class="title row">
        ${logoIcon}${trayIcon}
        <nav>${MENU.map((m) => html`<a href="#">${m}</a>`)}</nav>
        <span class="name">TSLab (2.0.38.0:32bit) - &lt;Неназвано&gt;*</span>
        <div class="wins">
          <button aria-label="Свернуть">${minimizeIcon}</button>
          <button aria-label="Восстановить">${restoreIcon}</button>
          <button aria-label="Закрыть">${closeIcon(14, "#000", 1.8)}</button>
        </div>
      </header>

      <nav class="tabs1 row">
        <a href="#">Управление скриптами</a>
        <a class="on" href="#"><span class="txt">Лаб: Новый скрипт2*</span>${closeIcon(10, "#c0d0ea")}</a>
        <span class="fill"></span>
        <div class="row arrows">${tri("l", "#777")}${tri("r", "#777")}${tri("d", "#eee")}${toolsIcon}</div>
      </nav>

      <nav class="tabs2 row">
        ${DOC_TABS.map((t) => html`<a href="#" class=${classMap({ on: !!t.active, [t.size]: true })}>${t.icon}<span class="txt">${t.label}</span>${t.active ? closeIcon(10, "#fff") : nothing}</a>`)}
        <span class="fill"></span>
        <div class="row cmds">
          ${tri("l", "#888")}${tri("r", "#888")}${tri("d", "#eee")}
          <button class="gap" aria-label="Открыть">${folderIcon}</button><button class="gap" aria-label="Сохранить">${saveIcon}</button>
          <button aria-label="Загрузить">${downloadIcon}</button><button aria-label="Обновить">${refreshIcon}</button>
          <button aria-label="Запустить">${playIcon}</button><button aria-label="Выполнить все">${runAllIcon}</button>
        </div>
      </nav>

      <div class="bar row">
        <button class="wide" aria-label="Отменить">${undoIcon}</button>
        <button class="off wide" aria-label="Повторить">${redoIcon}</button>
        <button class="off wide" aria-label="Развернуть">${boxIcon("#6c6c6c", true)}</button>
        <button class="off wide" aria-label="Свернуть">${boxIcon("#6c6c6c", false)}</button>
        <button class="wide" aria-label="Проверить">${checklistIcon}</button>
        <button class="wide" aria-label="Рука">${handIcon}</button>
        <div class="combo"><input aria-label="Имя блока" .value=${"Введите имя блока"}><button aria-label="Список">${tri("d", "#ddd")}</button></div>
        <button class="seek" aria-label="Найти">${seekIcon}</button>
      </div>

      <div class="main">
        <section class="work">
          <div class="canvas">
            ${diagram}
            ${LABELS.map((l) => this.label(l))}
            <span class="step">3</span>
            <p class="caption">${CAPTION.map((c) => html`<span>${c}</span>`)}</p>
            <div class="dialog" role="dialog" aria-label="Редактор формул">
              <header>Редактор формул<button aria-label="Закрыть">${closeIcon(14, "#000", 1.8)}</button></header>
              <div class="edit"><textarea aria-label="Формула" .value=${this.formula}
                @input=${(e: Event) => (this.formula = (e.target as HTMLTextAreaElement).value)}></textarea></div>
              <footer><button>OK</button><button>Отмена</button><span class="grip">${gripIcon}</span></footer>
            </div>
          </div>
          <div class="vbar"><button class="sb" aria-label="Вверх">${tri("u", "#222")}</button><button class="sb" aria-label="Вниз">${tri("d", "#222")}</button></div>
          <div class="hbar">
            <span class="zoom">100%${tri("d", "#ddd")}</span>
            <button class="sb" aria-label="Влево">${tri("l", "#222")}</button><span class="fill"></span>
            <button class="sb" aria-label="Вправо">${tri("r", "#222")}</button>
          </div>
          <div class="corner">${fitIcon}</div>
        </section>

        <aside class="side">
          <section class="panel tools">
            <h2>Панель инструментов<span class="dots"></span>${pinIcon}</h2>
            <div class="find">
              <button aria-label="Группы">${boxIcon("#fff", false)}</button><button class="az">A-Z</button>
              <input aria-label="Поиск"><button aria-label="Искать">${lensIcon}</button>
              <button class="clear" aria-label="Очистить">${closeIcon(15, "#fff", 2)}</button>
            </div>
            <div class="lists">
              <ul>${INDICATORS.map((n) => html`<li class=${classMap({ hot: n === "EMA" })}>${n}</li>`)}</ul>
              <div class="vbar"><button class="sb" aria-label="Вверх">${tri("u", "#ccc")}</button><span class="track1"></span>
                <span class="thumb"><i></i></span><span class="track2"></span><button class="sb" aria-label="Вниз">${tri("d", "#ccc")}</button></div>
              <div class="hbar"><button class="sb" aria-label="Влево">${tri("l", "#ddd")}</button><span class="thumb"><i></i></span>
                <span class="rest"></span><button class="sb" aria-label="Вправо">${tri("r", "#ddd")}</button></div>
            </div>
          </section>
          <section class="panel props">
            <h2>Свойства<span class="dots"></span>${pinIcon}</h2>
            <div class="grp">${chevronUp}Главная</div>
            <div class="prop"><label for="name">Имя блока</label><div class="val"><input id="name" .value=${"If4"}></div></div>
            <div class="prop"><span class="lbl">Обработчик</span><div class="val">Логическая формула</div></div>
            <div class="prop"><span class="lbl">Тип обработчика</span><div class="val">Потоковый</div></div>
            <div class="grp">${chevronUp}Параметры</div>
            <div class="prop"><label for="expr">Выражение</label><div class="val"><textarea id="expr" .value=${"closed<open\nd && closed\n[i-1] < opend\n[i-1]"}></textarea><button class="dots3" aria-label="Изменить выражение">...</button></div></div>
            <div class="prop"><label for="from">Начинать с</label><div class="val"><input id="from" .value=${"0"}></div></div>
            <nav class="ptabs"><a class="on" href="#"><span class="txt">Свойства</span></a><a href="#">Подробный</a></nav>
          </section>
        </aside>
      </div>

      <section class="log">
        <table>
          <colgroup><col class="c1"><col class="c2"><col class="c3"><col></colgroup>
          <thead><tr><th>Тип</th><th>Время</th><th>Номер</th><th>Сообщение</th></tr></thead>
          <tbody>${MESSAGES.map((m) => html`<tr><td>${errorIcon}</td><td>${m.time}</td><td>${m.num}</td><td>${m.text}</td></tr>`)}</tbody>
        </table>
      </section>

      <div class="status row">
        <div class="sheets"><span class="ribs"></span><a class="sheet" href="#"><span>Лист1</span>${sidePinIcon}</a><button class="add" aria-label="Добавить лист">+</button></div>
        <span class="fill"></span>
        ${this.filter("f1", "Сообщения", infoIcon, 0)}${this.filter("f2", "Предупреждения", warnIcon, 0)}${this.filter("f3", "Ошибки", errorIcon, 3)}
        <button class="more" aria-label="Свернуть журнал">${doubleDown}</button>
      </div>

      <footer class="taskbar row">
        <button aria-label="Пуск">${winIcon}</button><button aria-label="Поиск">${searchIcon}</button><button aria-label="Представление задач">${taskViewIcon}</button>
        <button class="app first" aria-label="Opera"><span>${operaIcon}</span></button><button class="app" aria-label="QUIK"><span>${quikIcon}</span></button>
        <button class="app cur" aria-label="TSLab"><span>${tslabIcon}</span></button>
        <span class="fill"></span>
        <div class="tray"><span>prog</span><span class="up">»</span>${trayUpIcon}${netIcon}${soundIcon}<span>ENG</span></div>
        <div class="clock">22:56<br>02.04.2020</div>
        <button class="bell" aria-label="Уведомления">${noteIcon}<b>1</b></button>
        <span class="edge"></span>
      </footer>`;
  }
}
